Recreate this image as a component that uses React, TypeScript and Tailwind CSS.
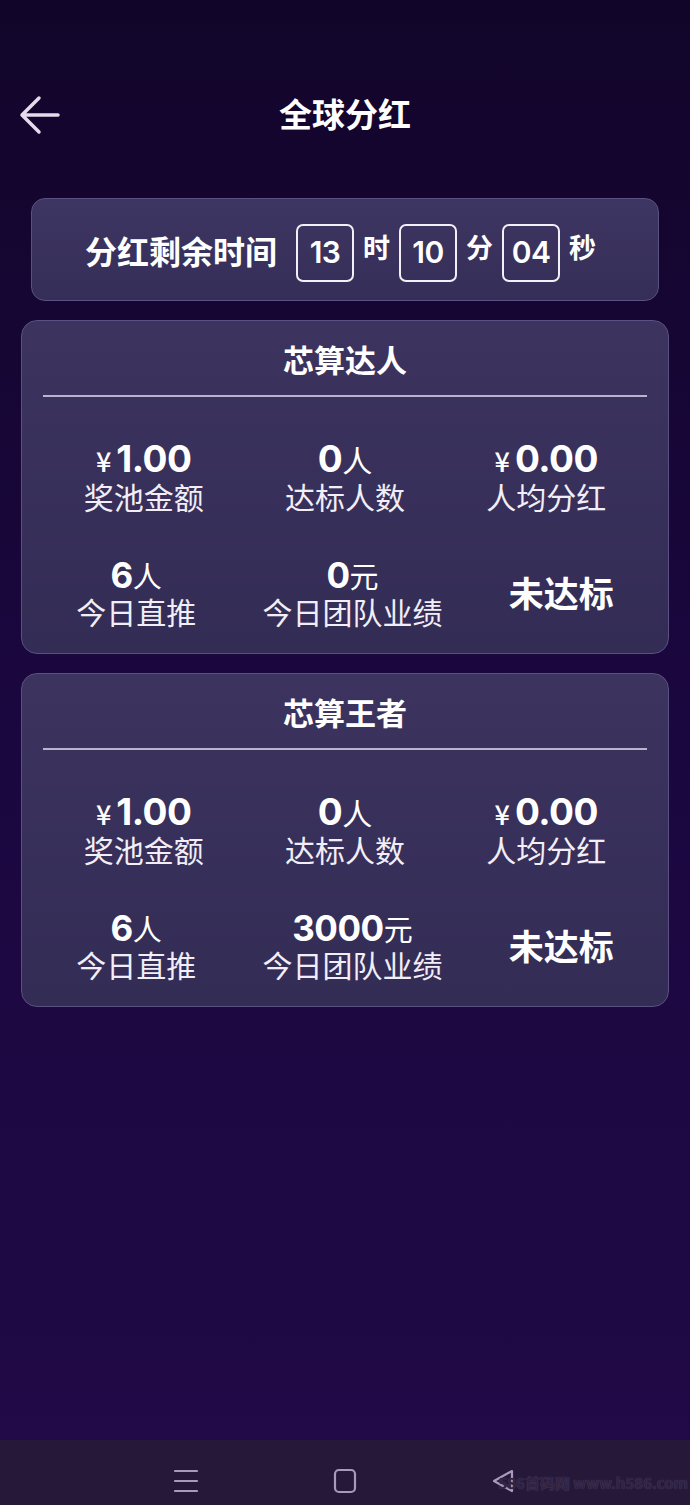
import React from "react";

const cjk = "font-['Noto_Sans_CJK_SC','Noto_Sans',sans-serif]";
const num = "font-['Inter','Noto_Sans_CJK_SC',sans-serif]";

function Stat({ value, unit, prefix, label }: { value: string; unit?: string; prefix?: string; label: string }) {
  return (
    <div className="flex flex-col items-center">
      <div className="flex items-baseline h-[40px] pt-[4px] leading-[36px]">
        {prefix && <span className={`${cjk} text-[27px] font-medium mr-[5px]`}>{prefix}</span>}
        <span className={`${num} text-[37px] font-bold tracking-[-0.5px]`}>{value}</span>
        {unit && <span className={`${cjk} text-[30px] font-normal`}>{unit}</span>}
      </div>
      <div className={`${cjk} text-[30px] leading-[38px] text-[#f1eef7]`}>{label}</div>
    </div>
  );
}

function Stat2({ value, unit, label }: { value: string; unit: string; label: string }) {
  return (
    <div className="flex flex-col items-center">
      <div className="flex items-baseline h-[38px] pt-[4px] leading-[34px]">
        <span className={`${num} text-[35px] font-bold tracking-[-0.5px]`}>{value}</span>
        <span className={`${cjk} text-[29px] font-normal`}>{unit}</span>
      </div>
      <div className={`${cjk} text-[30px] leading-[38px] text-[#f1eef7]`}>{label}</div>
    </div>
  );
}

function Card({ title, team }: { title: string; team: string }) {
  return (
    <div className="mx-[21px] rounded-[16px] border border-[#5a5082] bg-gradient-to-b from-[#3c345f] to-[#332c55] pt-[16px] pb-[23px] px-[21px] text-white">
      <div className={`${cjk} text-center text-[31px] font-bold leading-[44px]`}>{title}</div>
      <div className="mt-[14px] h-[2px] bg-[#bcb4cf]" />
      <div className="mt-[40px] flex justify-around">
        <Stat prefix="¥" value="1.00" label="奖池金额" />
        <Stat value="0" unit="人" label="达标人数" />
        <Stat prefix="¥" value="0.00" label="人均分红" />
      </div>
      <div className="mt-[39px] flex justify-around items-center">
        <Stat2 value="6" unit="人" label="今日直推" />
        <Stat2 value={team} unit="元" label="今日团队业绩" />
        <div className={`${cjk} text-[35px] font-bold leading-[44px]`}>未达标</div>
      </div>
    </div>
  );
}

function TimeBox({ v }: { v: string }) {
  return (
    <div className={`${num} mt-[6px] w-[58px] h-[58px] shrink-0 rounded-[7px] border-[2px] border-[#f2f0f6] flex items-center justify-center text-[30px] font-semibold text-white tracking-[-0.5px]`}>
      {v}
    </div>
  );
}

export default function App() {
  return (
    <div className="w-[690px] h-[1505px] flex flex-col overflow-hidden relative bg-gradient-to-b from-[#12052a] via-[#1b0740] to-[#210a47]">
      <div className="flex-1">
        <div className="relative mt-[78px] h-[70px] flex items-center justify-center">
          <svg className="absolute left-[18px] top-[16px]" width="44" height="42" viewBox="0 0 44 42" fill="none">
            <path d="M40 21H5M21 4L4 21L21 38" stroke="#e4dcea" strokeWidth="3.5" strokeLinecap="round" strokeLinejoin="round" />
          </svg>
          <div className={`${cjk} text-[33px] font-bold text-white leading-[44px]`}>全球分红</div>
        </div>
        <div className="mt-[50px] mx-[31px] h-[103px] rounded-[14px] border border-[#5a5082] bg-gradient-to-b from-[#3e3662] to-[#352e58] flex items-center pl-[53px] text-white">
          <div className={`${cjk} text-[32px] font-bold leading-[44px] mr-[19px]`}>分红剩余时间</div>
          <TimeBox v="13" />
          <span className={`${cjk} text-[27px] font-bold mx-[9px] mb-[4px]`}>时</span>
          <TimeBox v="10" />
          <span className={`${cjk} text-[27px] font-bold mx-[9px] mb-[4px]`}>分</span>
          <TimeBox v="04" />
          <span className={`${cjk} text-[27px] font-bold mx-[9px] mb-[4px]`}>秒</span>
        </div>
        <div className="mt-[19px] flex flex-col gap-[19px]">
          <Card title="芯算达人" team="0" />
          <Card title="芯算王者" team="3000" />
        </div>
      </div>
      <div className="h-[65px] bg-[#251838] flex items-center justify-center gap-[134px] pt-[17px]">
        <svg width="26" height="24" viewBox="0 0 26 24" fill="none">
          <path d="M2 2H24M2 12H24M2 22H24" stroke="#a99abc" strokeWidth="2.2" strokeLinecap="round" />
        </svg>
        <svg width="24" height="26" viewBox="0 0 24 26" fill="none">
          <rect x="2" y="2" width="20" height="22" rx="4" stroke="#a99abc" strokeWidth="2.2" />
        </svg>
        <svg width="26" height="26" viewBox="0 0 26 26" fill="none">
          <path d="M21 3L3 13L21 23Z" stroke="#a99abc" strokeWidth="2.2" strokeLinejoin="round" />
        </svg>
      </div>
      <div className={`${cjk} absolute right-[2px] bottom-[12px] text-[15px] font-bold text-[#2f2342] leading-[20px] [text-shadow:0_0_1px_#5b4d70]`}>
        586首码网 www.h586.com
      </div>
    </div>
  );
}
